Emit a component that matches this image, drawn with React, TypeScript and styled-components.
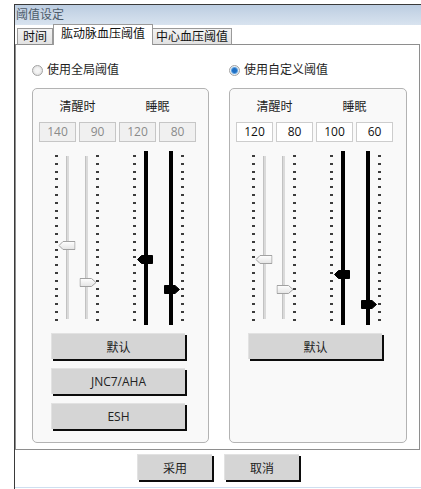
import React from "react";
import styled, { createGlobalStyle } from "styled-components";

const GlobalStyle = createGlobalStyle`
  html, body { margin: 0; padding: 0; background: #fff; }
  body {
    font-family: "Open Sans", "Noto Sans CJK SC", sans-serif;
    font-size: 12px;
    color: #1e1e1e;
  }
`;

// slider scale (values -> px inside the 174px slider box)
const MIN = 40;
const MAX = 262;
const TICK_TOP = 4;
const TICK_SPAN = 164;
const TICK_COUNT = 22;

const Window = styled.div`
  box-sizing: border-box;
  margin: 4px 0 0 14px;
  width: 407px;
  height: 485px;
  border-left: 1px solid #3a3a3a;
  border-top: 1px solid #3a3a3a;
  display: flex;
  flex-direction: column;
  background: #fff;
`;

const TitleBar = styled.div`
  height: 20px;
  line-height: 20px;
  padding-left: 1px;
  font-size: 12px;
  color: #4e5b6a;
  background: linear-gradient(#bccde1, #d8e3ef);
`;

const TabStrip = styled.div`
  height: 20px;
  display: flex;
  align-items: flex-end;
  padding-left: 2px;
  margin-bottom: -1px;
  position: relative;
  z-index: 1;
`;

const Tab = styled.div<{ $active?: boolean; $w: number }>`
  box-sizing: border-box;
  width: ${(p) => p.$w}px;
  height: ${(p) => (p.$active ? 21 : 17)}px;
  line-height: ${(p) => (p.$active ? 17 : 15)}px;
  text-align: center;
  font-size: 12px;
  color: #111;
  border: 1px solid #9a9a9a;
  border-bottom: ${(p) => (p.$active ? "none" : "1px solid #8e8e8e")};
  border-left: ${(p) => (p.$active ? "1px solid #9a9a9a" : "none")};
  background: ${(p) => (p.$active ? "#fff" : "linear-gradient(#f3f3f3, #e2e2e2)")};

  &:first-child {
    border-left: 1px solid #9a9a9a;
  }
`;

const Panel = styled.div`
  box-sizing: border-box;
  width: 405px;
  height: 406px;
  border: 1px solid #8e8e8e;
  background: #fff;
  display: grid;
  grid-template-columns: 177px 178px;
  column-gap: 20px;
  align-items: start;
  padding: 18px 0 0 16px;
`;

const Column = styled.div`
  display: flex;
  flex-direction: column;
`;

const RadioRow = styled.label`
  display: flex;
  align-items: center;
  gap: 4px;
  height: 14px;
  line-height: 14px;
  font-size: 12px;
  color: #1e1e1e;
`;

const RadioCircle = styled.span<{ $checked?: boolean }>`
  box-sizing: border-box;
  width: 11px;
  height: 11px;
  border-radius: 50%;
  border: 1px solid #a3a3a3;
  background: ${(p) =>
    p.$checked
      ? "radial-gradient(circle, #1f6fc4 0 2px, #5fa3e0 3px, #e8eef5 4px)"
      : "radial-gradient(circle, #f4f4f4 0 2px, #dedede 5px)"};
`;

const Group = styled.div`
  box-sizing: border-box;
  margin-top: 11px;
  height: 355px;
  border: 1px solid #b3b3b3;
  border-radius: 5px;
  background: #f9f9f9;
  padding: 11px 0 0 6px;
`;

const LabelRow = styled.div`
  display: grid;
  grid-template-columns: 77px 77px;
  column-gap: 3px;
  height: 14px;
  line-height: 14px;
  text-align: center;
  font-size: 12px;
  color: #1e1e1e;
`;

const InputRow = styled.div`
  display: flex;
  gap: 3px;
  margin-top: 8px;
`;

const ValueBox = styled.div<{ $disabled?: boolean }>`
  box-sizing: border-box;
  width: 37px;
  height: 20px;
  line-height: 18px;
  text-align: center;
  font-size: 12px;
  border: 1px solid ${(p) => (p.$disabled ? "#c6c6c6" : "#cdcdcd")};
  background: ${(p) => (p.$disabled ? "#f0f0f0" : "#fff")};
  color: ${(p) => (p.$disabled ? "#8a8a8a" : "#111")};
`;

const SliderRow = styled.div`
  display: flex;
  height: 174px;
  margin-top: 9px;
  padding-left: 16px;
`;

const Slider = styled.div<{ $ml: number; $ticksRight?: boolean }>`
  display: flex;
  flex-direction: ${(p) => (p.$ticksRight ? "row-reverse" : "row")};
  gap: 8px;
  margin-left: ${(p) => p.$ml}px;
  height: 174px;
`;

const Ticks = styled.div`
  display: flex;
  flex-direction: column;
  justify-content: space-between;
  margin-top: ${TICK_TOP}px;
  height: ${TICK_SPAN + 2}px;
`;

const Tick = styled.span`
  display: block;
  width: 3px;
  height: 2px;
  background: #3c3c3c;
`;

const TrackColumn = styled.div<{ $dark?: boolean }>`
  position: relative;
  width: ${(p) => (p.$dark ? 4 : 3)}px;
  height: 174px;
`;

const TrackLine = styled.div<{ $dark?: boolean }>`
  box-sizing: border-box;
  width: 100%;
  margin-top: ${(p) => (p.$dark ? 0 : 5)}px;
  height: ${(p) => (p.$dark ? 174 : 163)}px;
  background: ${(p) => (p.$dark ? "#000" : "#dadada")};
  border-left: ${(p) => (p.$dark ? "none" : "1px solid #c2c2c2")};
`;

const Thumb = styled.svg<{ $right?: boolean }>`
  position: absolute;
  left: 50%;
  transform: translateX(calc(-50% ${(p) => (p.$right ? "+ 1px" : "- 1px")}));
  display: block;
`;

const ButtonStack = styled.div`
  display: flex;
  flex-direction: column;
  gap: 9px;
  margin-top: 8px;
  padding-left: 12px;
`;

const PushButton = styled.button<{ $w: number }>`
  box-sizing: border-box;
  width: ${(p) => p.$w}px;
  height: 26px;
  padding: 0;
  border: none;
  border-top: 1px solid #e2e2e2;
  border-left: 1px solid #e2e2e2;
  background: #d5d5d5;
  box-shadow: 2px 2px 0 #0c0c0c;
  font-family: "Open Sans", "Noto Sans CJK SC", sans-serif;
  font-size: 12px;
  color: #222;
`;

const Footer = styled.div`
  box-sizing: border-box;
  height: 38px;
  padding-top: 4px;
  display: flex;
  justify-content: center;
  gap: 12px;
  border-bottom: 1px solid #cfdff0;
`;

type SliderSpec = { ml: number; ticksRight: boolean; dark: boolean };

const sliderSpecs: SliderSpec[] = [
  { ml: 0, ticksRight: false, dark: false },
  { ml: 16, ticksRight: true, dark: false },
  { ml: 34, ticksRight: false, dark: true },
  { ml: 21, ticksRight: true, dark: true },
];

const ThumbShape = ({ right, dark, top }: { right: boolean; dark: boolean; top: number }) => {
  const w = dark ? 16 : 17;
  const h = 9;
  const pts = right
    ? `0.5,0.5 ${w - 5},0.5 ${w - 0.5},${h / 2} ${w - 5},${h - 0.5} 0.5,${h - 0.5}`
    : `0.5,${h / 2} 4.5,0.5 ${w - 0.5},0.5 ${w - 0.5},${h - 0.5} 4.5,${h - 0.5}`;
  const gid = `tg${right ? "r" : "l"}`;
  return (
    <Thumb $right={right} width={w} height={h} viewBox={`0 0 ${w} ${h}`} style={{ top }}>
      <defs>
        <linearGradient id={gid} x1="0" y1="0" x2="0" y2="1">
          <stop offset="0" stopColor="#ffffff" />
          <stop offset="1" stopColor="#e4e4e4" />
        </linearGradient>
      </defs>
      <polygon
        points={pts}
        fill={dark ? "#000" : `url(#${gid})`}
        stroke={dark ? "#000" : "#a2a2a2"}
        strokeWidth="1"
      />
    </Thumb>
  );
};

const ticks = Array.from({ length: TICK_COUNT }, (_, i) => i);

const thumbTop = (v: number) => TICK_TOP + ((MAX - v) / (MAX - MIN)) * TICK_SPAN - 4.5;

const ThresholdGroup = ({
  disabled,
  values,
  buttons,
}: {
  disabled?: boolean;
  values: number[];
  buttons: string[];
}) => (
  <Group>
    <LabelRow>
      <span>清醒时</span>
      <span>睡眠</span>
    </LabelRow>
    <InputRow>
      {values.map((v, i) => (
        <ValueBox key={i} $disabled={disabled}>
          {v}
        </ValueBox>
      ))}
    </InputRow>
    <SliderRow>
      {sliderSpecs.map((s, i) => (
        <Slider key={i} $ml={s.ml} $ticksRight={s.ticksRight}>
          <Ticks>
            {ticks.map((t) => (
              <Tick key={t} />
            ))}
          </Ticks>
          <TrackColumn $dark={s.dark}>
            <TrackLine $dark={s.dark} />
            <ThumbShape right={s.ticksRight} dark={s.dark} top={thumbTop(values[i])} />
          </TrackColumn>
        </Slider>
      ))}
    </SliderRow>
    <ButtonStack>
      {buttons.map((b) => (
        <PushButton key={b} $w={134}>
          {b}
        </PushButton>
      ))}
    </ButtonStack>
  </Group>
);

export default function App() {
  return (
    <>
      <GlobalStyle />
      <Window>
        <TitleBar>阈值设定</TitleBar>
        <TabStrip>
          <Tab $w={36}>时间</Tab>
          <Tab $w={100} $active>
            肱动脉血压阈值
          </Tab>
          <Tab $w={79}>中心血压阈值</Tab>
        </TabStrip>
        <Panel>
          <Column>
            <RadioRow>
              <RadioCircle />
              使用全局阈值
            </RadioRow>
            <ThresholdGroup disabled values={[140, 90, 120, 80]} buttons={["默认", "JNC7/AHA", "ESH"]} />
          </Column>
          <Column>
            <RadioRow>
              <RadioCircle $checked />
              使用自定义阈值
            </RadioRow>
            <ThresholdGroup values={[120, 80, 100, 60]} buttons={["默认"]} />
          </Column>
        </Panel>
        <Footer>
          <PushButton $w={75}>采用</PushButton>
          <PushButton $w={75}>取消</PushButton>
        </Footer>
      </Window>
    </>
  );
}
